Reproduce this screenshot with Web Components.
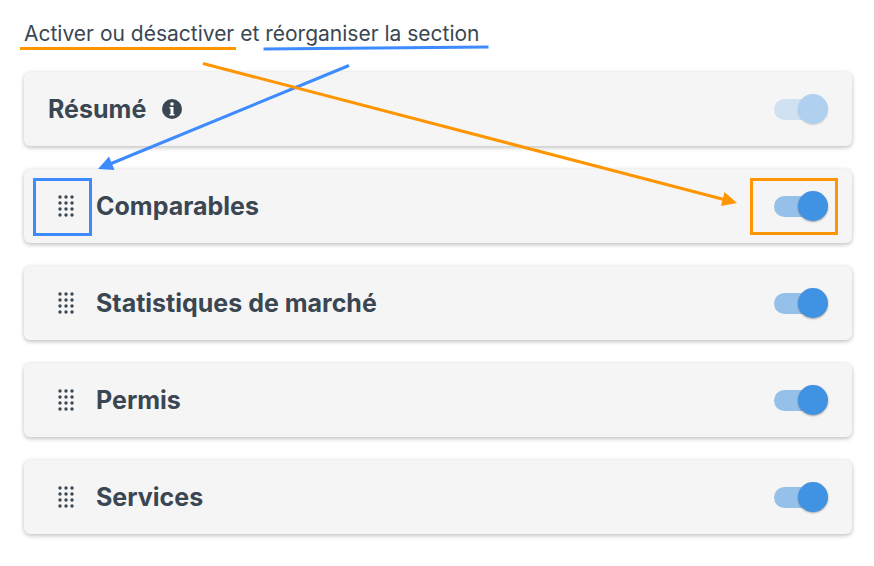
<!DOCTYPE html>
<html lang="fr">
<head>
<meta charset="utf-8">
<meta name="viewport" content="width=device-width, initial-scale=1">
<title>Sections du rapport</title>
<style>
  body { margin: 0; background: #fff; color: #3a4753; font-family: Inter, "Liberation Sans", sans-serif; }
</style>
</head>
<body>
<section-panel>
  <span slot="intro">Activer ou désactiver et réorganiser la section</span>
  <section-row fixed>Résumé</section-row>
  <section-row highlighted>Comparables</section-row>
  <section-row>Statistiques de marché</section-row>
  <section-row>Permis</section-row>
  <section-row>Services</section-row>
  <guide-arrows slot="guides"></guide-arrows>
</section-panel>

<template id="panel-template">
  <style>
    :host { display: block; position: relative; padding: 20px 22px 32px 24px; }
    p { margin: 0 0 24px; font-size: 21px; line-height: 28px; }
    .rows { display: flex; flex-direction: column; gap: 23px; }
  </style>
  <p><slot name="intro"></slot></p>
  <div class="rows"><slot></slot></div>
  <slot name="guides"></slot>
</template>

<template id="row-template">
  <style>
    :host {
      display: flex; align-items: center; box-sizing: border-box; min-height: 74px;
      padding: 12px 24px; border-radius: 6px; background: #f5f5f5;
      box-shadow: 0 2px 4px rgba(0,0,0,.2), 0 0 4px rgba(0,0,0,.08);
    }
    button { display: grid; place-items: center; padding: 0; border: 0; background: none; color: inherit; }
    .grip { position: relative; width: 36px; height: 36px; margin-right: 12px; cursor: grab; }
    .info { margin-left: 16px; }
    :host([fixed]) .grip, :host(:not([fixed])) .info { display: none; }
    label { font-size: 25px; line-height: 32px; font-weight: 660; }
    svg { display: block; fill: currentColor; }
    .switch { position: relative; display: flex; margin-left: auto; }
    .switch input {
      appearance: none; display: flex; align-items: center; justify-content: flex-end;
      position: relative; width: 54px; height: 30px; margin: 0; cursor: pointer;
    }
    .switch input::before {
      content: ""; position: absolute; inset: 5px 8px 4px 0; border-radius: 11px; background: #94c0ea;
    }
    .switch input::after {
      content: ""; position: relative; width: 30px; height: 30px; border-radius: 50%;
      background: #4092e2; box-shadow: 0 1px 2px rgba(0,0,0,.35);
    }
    .switch input:not(:checked) { justify-content: flex-start; }
    .switch input:disabled::before { background: #d0e1f2; }
    .switch input:disabled::after { background: #b0d0ef; box-shadow: 0 1px 2px rgba(0,0,0,.15); }
    :host([highlighted]) .grip::after {
      content: ""; position: absolute; inset: -10px -8px -12px -15px; border: 3px solid #3d8bfd;
    }
    :host([highlighted]) .switch::after {
      content: ""; position: absolute; inset: -13px -10px -14px -24px; border: 3px solid #ff9500; pointer-events: none;
    }
  </style>
  <button class="grip" type="button" aria-label="Réorganiser">
    <svg class="dots" width="18" height="24" viewBox="0 0 18 24" aria-hidden="true"></svg>
  </button>
  <label for="enabled"><slot></slot></label>
  <button class="info" type="button" aria-label="Informations">
    <svg width="20" height="20" viewBox="0 0 20 20" aria-hidden="true">
      <circle cx="10" cy="10" r="10"/>
      <circle cx="10" cy="5" r="1.800" fill="#fff"/>
      <path fill="#fff" d="M7.500 8h4v7h1v1.400h-5V15h1V9.400h-1z"/>
    </svg>
  </button>
  <span class="switch"><input id="enabled" type="checkbox" role="switch" checked></span>
</template>

<template id="arrows-template">
  <style>
    :host { position: absolute; inset: 0; overflow: hidden; pointer-events: none; }
    svg { display: block; }
    line { stroke-width: 3; }
    .blue { stroke: #3d8bfd; fill: #3d8bfd; }
    .orange { stroke: #ff9500; fill: #ff9500; }
    polygon { stroke: none; }
  </style>
  <svg width="874" height="566" viewBox="0 0 874 566" aria-hidden="true">
    <g class="blue">
      <line x1="263.500" y1="49" x2="488.500" y2="47"/>
      <line x1="349" y1="65.500" x2="110" y2="164"/>
      <polygon points="98,169 109,156.500 114.500,170"/>
    </g>
    <g class="orange">
      <line x1="20" y1="48.500" x2="236" y2="48.500"/>
      <line x1="203" y1="63.500" x2="724" y2="199.500"/>
      <polygon points="737,203 724.500,192 721,206"/>
    </g>
  </svg>
</template>

<script>
  const fill = (host, id) => {
    const root = host.attachShadow({ mode: "open" });
    root.append(document.getElementById(id).content.cloneNode(true));
    return root;
  };

  customElements.define("section-panel", class extends HTMLElement {
    constructor() { super(); fill(this, "panel-template"); }
  });

  customElements.define("section-row", class extends HTMLElement {
    constructor() {
      super();
      const root = fill(this, "row-template");
      const dots = root.querySelector(".dots");
      for (let y = 0; y < 4; y++) {
        for (let x = 0; x < 3; x++) {
          const dot = document.createElementNS("http://www.w3.org/2000/svg", "circle");
          dot.setAttribute("cx", 3 + x * 6);
          dot.setAttribute("cy", 3 + y * 6);
          dot.setAttribute("r", 1.7);
          dots.append(dot);
        }
      }
    }
    connectedCallback() {
      this.shadowRoot.querySelector("input").disabled = this.hasAttribute("fixed");
    }
  });

  customElements.define("guide-arrows", class extends HTMLElement {
    constructor() { super(); fill(this, "arrows-template"); }
  });
</script>
</body>
</html>
